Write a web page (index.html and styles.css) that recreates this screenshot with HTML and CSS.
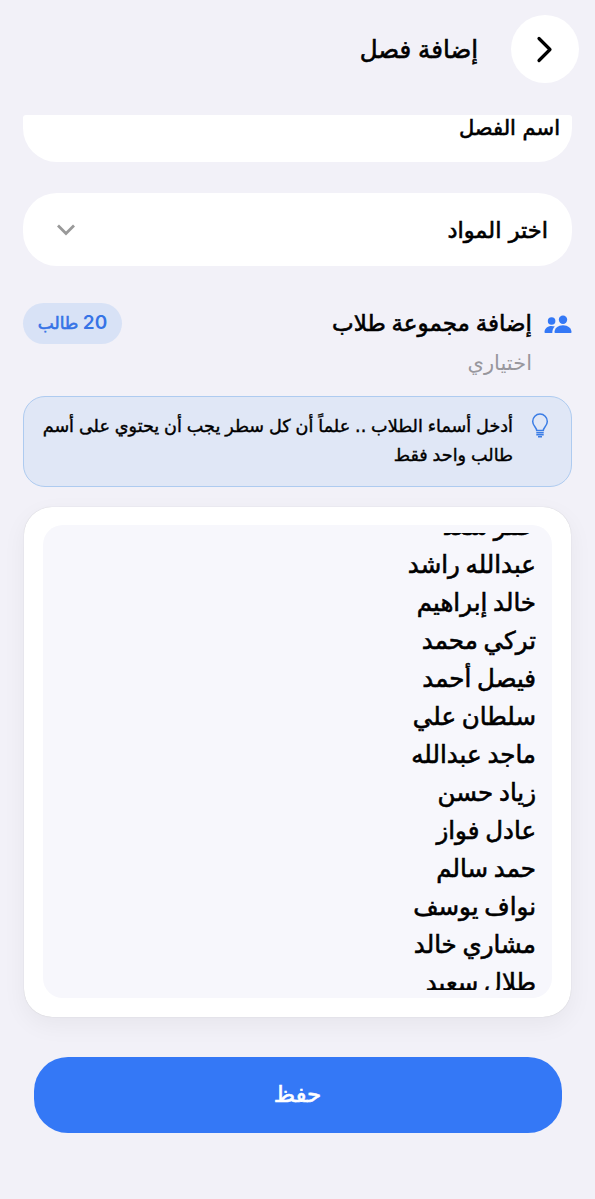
FILE: index.html
```
<!DOCTYPE html>
<html lang="ar" dir="rtl">
<head>
    <meta charset="UTF-8">
    <meta name="viewport" content="width=device-width, initial-scale=1.0">
    <title>إضافة فصل</title>
    <link rel="stylesheet" href="styles.css">
</head>
<body>
    <header class="header">
        <button class="back" aria-label="رجوع">
            <svg width="18" height="28" viewBox="0 0 18 28"><path d="M3 3.500l11 11L3 25.500"/></svg>
        </button>
        <h1>إضافة فصل</h1>
    </header>

    <main class="content">
        <div class="name-field"><span>اسم الفصل</span></div>

        <div class="select">
            <span>اختر المواد</span>
            <svg class="chevron" width="20" height="14" viewBox="0 0 20 14"><path d="M2 2.500l8 8 8-8"/></svg>
        </div>

        <div class="group">
            <svg class="people" width="28" height="20" viewBox="0 0 28 20">
                <circle cx="7.600" cy="6" r="3.800"/>
                <circle cx="19" cy="4.800" r="4.200"/>
                <path d="M0.500 17.200c0-3.800 3-6.300 7-6.300 1.400 0 2.500.3 3.300.7-1.600 1.600-2.500 3.600-2.500 6.400H1.300c-.5 0-.8-.3-.8-.8z"/>
                <path d="M10.500 17.200c0-3.900 3.500-6.900 8.500-6.900s8.500 3 8.500 6.900c0 .5-.3.800-.8.800H11.300c-.5 0-.8-.3-.8-.8z"/>
            </svg>
            <div class="group-text">
                <h2>إضافة مجموعة طلاب</h2>
                <p>اختياري</p>
            </div>
            <span class="badge"><b>20</b> طالب</span>
        </div>

        <div class="hint">
            <svg class="bulb" width="18" height="26" viewBox="0 0 18 26">
                <path d="M5.700 17.600c0-3.500-4-4.600-4-9.200a7.300 7.300 0 0 1 14.600 0c0 4.600-4 5.700-4 9.200z"/>
                <path d="M5.300 19.700h7.400M5.300 21.700h7.400M7 23.700h4"/>
            </svg>
            <p>أدخل أسماء الطلاب .. علماً أن كل سطر يجب أن يحتوي على أسم<br>طالب واحد فقط</p>
        </div>

        <div class="card">
            <div class="names">
                <ul class="list">
                    <li>عمر سعد</li>
                    <li>عبدالله راشد</li>
                    <li>خالد إبراهيم</li>
                    <li>تركي محمد</li>
                    <li>فيصل أحمد</li>
                    <li>سلطان علي</li>
                    <li>ماجد عبدالله</li>
                    <li>زياد حسن</li>
                    <li>عادل فواز</li>
                    <li>حمد سالم</li>
                    <li>نواف يوسف</li>
                    <li>مشاري خالد</li>
                    <li>طلال سعيد</li>
                </ul>
            </div>
        </div>

        <button class="save">حفظ</button>
    </main>
</body>
</html>
```
FILE: styles.css
```
* {margin: 0; padding: 0; box-sizing: border-box;}
body {
    font-family: "DejaVu Sans", sans-serif;
    background: #f2f1f8;
    color: #000;
    height: 1199px;
    overflow: hidden;
    -webkit-text-stroke: 0.6px;
}
svg {display: block; flex: none; fill: none;}
button {border: none; font-family: inherit;}
.header {
    display: flex;
    align-items: center;
    gap: 33px;
    height: 115px;
    padding: 15px 16px 32px;
}
.back {
    display: flex;
    align-items: center;
    justify-content: center;
    width: 68px;
    height: 68px;
    border-radius: 50%;
    background: #fff;
}
.back path {stroke: #000; stroke-width: 3.2; stroke-linecap: round; stroke-linejoin: round;}
h1 {font-size: 24.5px; font-weight: 500; word-spacing: -1px;}
.content {padding: 0 23px;}
.name-field {
    height: 47px;
    padding: 0 12px;
    border-radius: 3px 3px 34px 34px;
    background: #fff;
    font-size: 21px;
    line-height: 27px;
}
.select {
    display: flex;
    align-items: center;
    justify-content: space-between;
    height: 73px;
    margin-top: 31px;
    padding: 0 24px 0 33px;
    border-radius: 34px;
    background: #fff;
    font-size: 22.5px;
}
.chevron path {stroke: #999; stroke-width: 2.8;}
.group {display: flex; margin-top: 37px; height: 93px;}
.people {margin-top: 12px; fill: #3478f6;}
.group-text {flex: 1; margin-right: 12px;}
h2 {font-size: 23px; font-weight: 500; line-height: 40px; word-spacing: -1.5px;}
.group-text p {font-size: 21px; line-height: 41px; color: #98979d; -webkit-text-stroke: 0;}
.badge {
    width: 99px;
    height: 41px;
    border-radius: 21px;
    background: #d8e2f6;
    color: #3673e6;
    font-size: 17px;
    line-height: 39px;
    text-align: center;
    word-spacing: -1px;
}
.badge b {
    font-family: "Inter", sans-serif;
    font-size: 19px;
    font-weight: 600;
    -webkit-text-stroke: 0;
}
.hint {
    display: flex;
    gap: 18px;
    height: 91px;
    padding: 15px 22px 0 18px;
    border: 1px solid #aecbf0;
    border-radius: 22px;
    background: #e0e7f6;
}
.bulb {margin-top: 1px;}
.bulb path {stroke: #3b7de5; stroke-width: 1.5;}
.hint p {
    font-size: 17.6px;
    line-height: 29px;
    white-space: nowrap;
    word-spacing: -0.7px;
    -webkit-text-stroke: 0.4px;
}
.card {
    height: 510px;
    margin: 20px 1px 0;
    padding: 18px 19px 19px;
    border-radius: 28px;
    background: #fff;
    box-shadow: 0 8px 24px rgba(0,0,0,0.05), 0 0 1px rgba(0,0,0,0.2);
}
.names {
    height: 473px;
    padding: 8px 16px;
    border-radius: 20px;
    background: #f7f7fc;
}
.list {
    height: 457px;
    overflow: hidden;
    list-style: none;
}
.list li {height: 38px; font-size: 24.5px; line-height: 38px; word-spacing: -2px;}
/* list is scrolled part of a row down */
.list li:first-child {margin-top: -25px;}
.save {
    display: block;
    width: 528px;
    height: 76px;
    margin: 40px auto 0;
    padding-bottom: 3px;
    border-radius: 34px;
    background: #3478f6;
    color: #fff;
    font-size: 23px;
}
```
